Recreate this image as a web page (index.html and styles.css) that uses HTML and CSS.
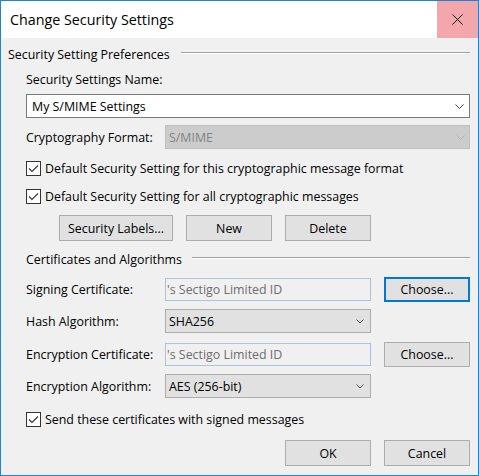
FILE: index.html
```html
<!DOCTYPE html>
<html>
<head>
<meta charset="utf-8">
<link rel="stylesheet" href="styles.css">
</head>
<body>
<div class="window">
  <div class="titlebar">
    <span class="title">Change Security Settings</span>
    <div class="close">
      <svg width="11" height="11" viewBox="0 0 11 11"><path d="M0.5 0.5 L10.5 10.5 M10.5 0.5 L0.5 10.5" stroke="#000" stroke-width="1" fill="none"/></svg>
    </div>
  </div>
  <div class="content">
    <div class="group-header g1"><span class="gh-text">Security Setting Preferences</span><div class="rule"></div></div>
    <div class="indent">
      <div class="label name-label">Security Settings Name:</div>
      <div class="combo combo-edit name-combo">
        <span class="combo-text">My S/MIME Settings</span>
        <svg class="chev-big" width="9" height="5" viewBox="0 0 9 5"><path d="M0.5 0.5 L4.5 4.5 L8.5 0.5" stroke="#444" stroke-width="1" fill="none"/></svg>
      </div>
      <div class="row r-crypto">
        <div class="row-label">Cryptography Format:</div>
        <div class="combo combo-disabled wide-ctl">
          <span class="combo-text">S/MIME</span>
          <svg class="chev-big" width="9" height="5" viewBox="0 0 9 5"><path d="M0.5 0.5 L4.5 4.5 L8.5 0.5" stroke="#b5b5b5" stroke-width="1" fill="none"/></svg>
        </div>
      </div>
      <div class="check-row c1">
        <span class="box"><svg width="13" height="13" viewBox="0 0 13 13"><path d="M2 6.5 L5 9.5 L11 3.5" stroke="#333" stroke-width="1.1" fill="none"/></svg></span>
        <span class="check-text">Default Security Setting for this cryptographic message format</span>
      </div>
      <div class="check-row c2">
        <span class="box"><svg width="13" height="13" viewBox="0 0 13 13"><path d="M2 6.5 L5 9.5 L11 3.5" stroke="#333" stroke-width="1.1" fill="none"/></svg></span>
        <span class="check-text">Default Security Setting for all cryptographic messages</span>
      </div>
      <div class="btn-row">
        <div class="btn btn-labels">Security Labels...</div>
        <div class="btn">New</div>
        <div class="btn">Delete</div>
      </div>
    </div>
    <div class="group-header g2"><span class="gh-text">Certificates and Algorithms</span><div class="rule"></div></div>
    <div class="indent">
      <div class="row r-sign">
        <div class="row-label">Signing Certificate:</div>
        <div class="textbox">'s Sectigo Limited ID</div>
        <div class="btn btn-focus">Choose...</div>
      </div>
      <div class="row r-hash">
        <div class="row-label">Hash Algorithm:</div>
        <div class="combo combo-list">
          <span class="combo-text">SHA256</span>
          <svg class="chev-small" width="8" height="5" viewBox="0 0 8 5"><path d="M0.5 0.5 L4 4 L7.5 0.5" stroke="#555" stroke-width="1" fill="none"/></svg>
        </div>
      </div>
      <div class="row r-enc">
        <div class="row-label">Encryption Certificate:</div>
        <div class="textbox">'s Sectigo Limited ID</div>
        <div class="btn">Choose...</div>
      </div>
      <div class="row r-algo">
        <div class="row-label">Encryption Algorithm:</div>
        <div class="combo combo-list">
          <span class="combo-text">AES (256-bit)</span>
          <svg class="chev-small" width="8" height="5" viewBox="0 0 8 5"><path d="M0.5 0.5 L4 4 L7.5 0.5" stroke="#555" stroke-width="1" fill="none"/></svg>
        </div>
      </div>
      <div class="check-row c3">
        <span class="box"><svg width="13" height="13" viewBox="0 0 13 13"><path d="M2 6.5 L5 9.5 L11 3.5" stroke="#333" stroke-width="1.1" fill="none"/></svg></span>
        <span class="check-text">Send these certificates with signed messages</span>
      </div>
    </div>
    <div class="footer">
      <div class="btn">OK</div>
      <div class="btn">Cancel</div>
    </div>
  </div>
</div>
</body>
</html>
```

FILE: styles.css
```css
* { box-sizing: border-box; }
html, body { margin: 0; padding: 0; }
body {
  font-family: "Open Sans", "Noto Sans", sans-serif;
  font-size: 12.4px;
  color: #000;
  background: #f0f0f0;
}
.window {
  width: 479px;
  height: 476px;
  border: 1px solid #1a84d8;
  background: #f0f0f0;
  display: flex;
  flex-direction: column;
}
.titlebar {
  height: 37px;
  background: #fff;
  display: flex;
  align-items: center;
  padding-left: 9px;
  flex-shrink: 0;
}
.title {
  font-size: 14.3px;
  flex: 1;
  color: #000;
  padding-bottom: 1px;
}
.close {
  width: 41px;
  height: 37px;
  background: #f4a6ad;
  display: flex;
  align-items: center;
  justify-content: center;
}
.content {
  padding: 0 8px 0 7px;
}
.group-header {
  display: flex;
  height: 16px;
  line-height: 16px;
}
.g1 { margin-top: 9px; }
.g2 { margin-top: 11px; padding-left: 18px; }
.gh-text { white-space: nowrap; }
.rule {
  flex: 1;
  height: 2px;
  margin-top: 5px;
  border-top: 1px solid #a0a0a0;
  border-bottom: 1px solid #fff;
}
.g1 .rule { margin-left: 11px; }
.g2 .rule { margin-left: 10px; }
.indent { padding-left: 18px; }
.label { line-height: 16px; }
.name-label { margin-top: 9px; }
.combo {
  height: 24px;
  display: flex;
  align-items: center;
  justify-content: space-between;
  border: 1px solid #7a7a7a;
  white-space: nowrap;
}
.combo-edit { background: #fff; padding: 0 5px 0 5px; }
.name-combo { margin-top: 6px; width: 444px; }
.combo-disabled {
  background: #cccccc;
  border-color: #bfbfbf;
  color: #838383;
  padding: 0 4px 0 3px;
}
.combo-list {
  width: 206px;
  background: #e1e1e1;
  border-color: #adadad;
  padding: 0 6px 0 3px;
}
.wide-ctl { width: 305px; }
.row {
  display: flex;
  align-items: center;
}
.row-label { width: 139px; white-space: nowrap; }
.r-crypto { margin-top: 7px; height: 24px; }
.r-sign { margin-top: 8px; height: 26px; }
.r-hash { margin-top: 7px; height: 24px; }
.r-enc { margin-top: 8px; height: 26px; }
.r-algo { margin-top: 7px; height: 24px; }
.textbox {
  width: 206px;
  height: 23px;
  border: 1px solid #aac3df;
  background: #f0f0f0;
  color: #6d6d6d;
  padding-left: 1px;
  line-height: 21px;
  white-space: nowrap;
}
.r-sign .btn, .r-enc .btn { margin-left: 13px; height: 25px; }
.check-row {
  display: flex;
  align-items: center;
  height: 15px;
}
.c1 { margin-top: 12px; }
.c2 { margin-top: 13px; }
.c3 { margin-top: 14px; }
.box {
  width: 15px;
  height: 15px;
  border: 1px solid #333;
  background: #fff;
  display: flex;
  align-items: center;
  justify-content: center;
  flex-shrink: 0;
}
.box svg { display: block; }
.check-text { margin-left: 4px; white-space: nowrap; line-height: 15px; }
.btn-row {
  display: flex;
  gap: 13px;
  margin-top: 11px;
  padding-left: 33px;
}
.btn {
  width: 86px;
  height: 26px;
  background: #e1e1e1;
  border: 1px solid #adadad;
  display: flex;
  align-items: center;
  justify-content: center;
  white-space: nowrap;
  flex-shrink: 0;
}
.btn-labels { width: 114px; }
.btn-focus { border: 2px solid #0078d7; }
.footer {
  display: flex;
  justify-content: flex-end;
  gap: 13px;
  margin-top: 13px;
}
```
